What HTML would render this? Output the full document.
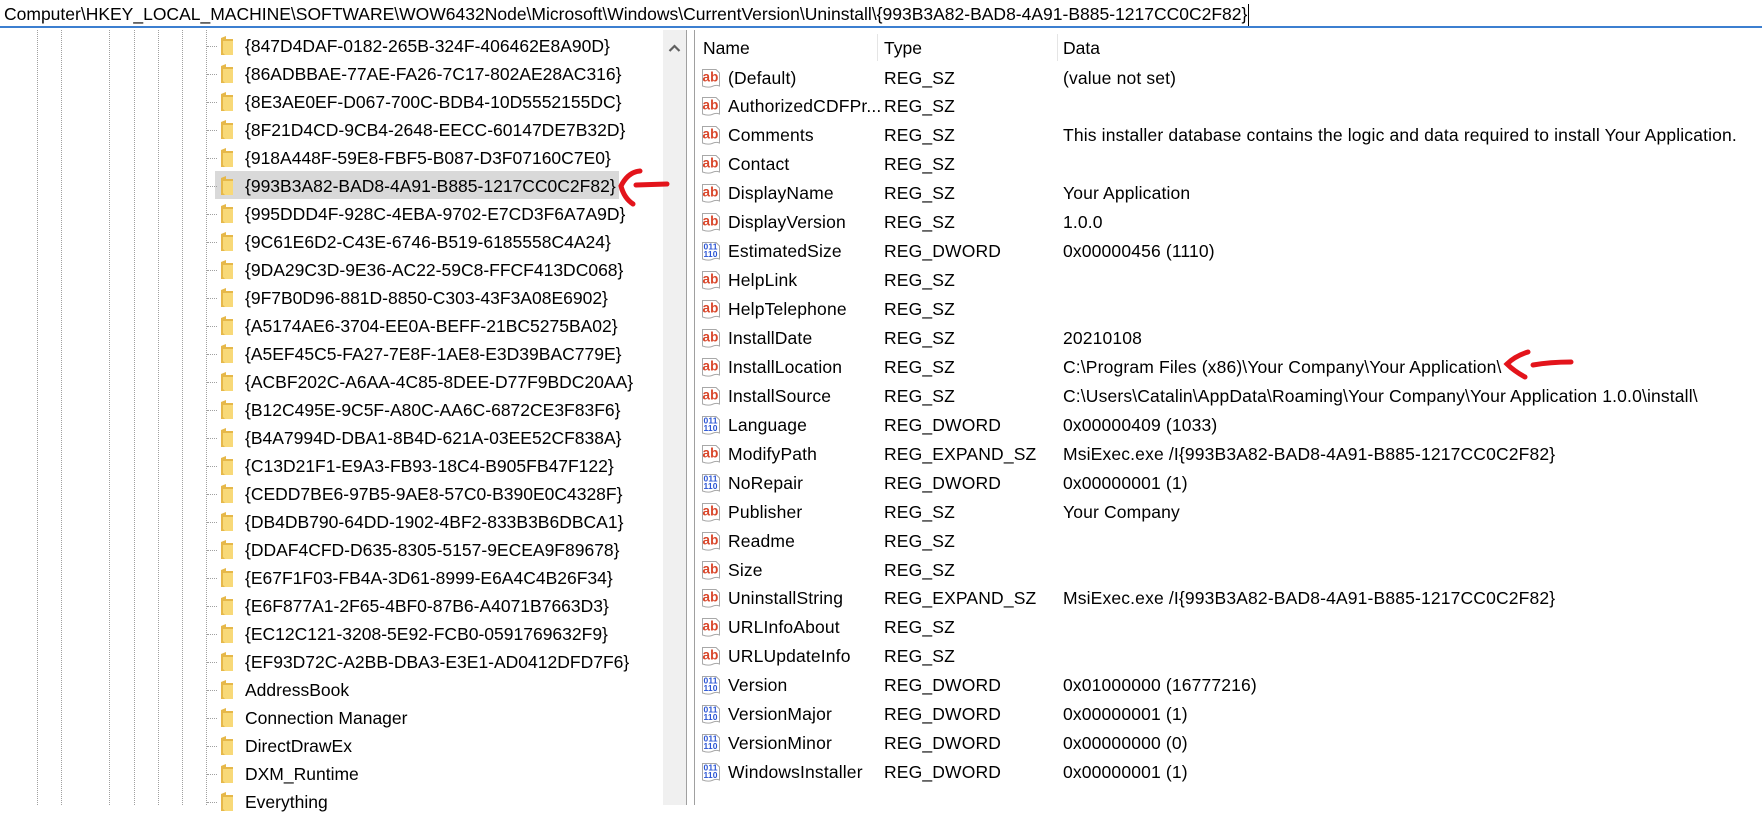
<!DOCTYPE html>
<html><head><meta charset="utf-8">
<style>
*{margin:0;padding:0;box-sizing:border-box}
html,body{width:1762px;height:805px;overflow:hidden;background:#fff;font-family:"Liberation Sans",sans-serif;color:#000}
#addr{position:absolute;left:0;top:0;width:1762px;height:28px;border-bottom:2px solid #3c7fd0;font-size:17.5px;line-height:28px;padding-left:4px;white-space:nowrap;letter-spacing:0}
#addr i{display:inline-block;width:1px;height:22px;background:#000;vertical-align:middle;margin-left:1px}
.vd{position:absolute;top:30px;height:775px;width:0;border-left:1px dotted #a0a0a0}
.t{position:absolute;left:0;height:28px;width:663px;font-size:17.5px;line-height:28px;letter-spacing:0;white-space:nowrap}
.t .h{position:absolute;left:207px;top:14px;width:10px;border-top:1px dotted #a0a0a0}
.t .f{position:absolute;left:220px;top:4px;width:14px;height:20px}
.t span{position:absolute;left:245px;top:0}
.sel{position:absolute;left:215px;top:171px;width:404px;height:28px;background:#d9d9d9}
#sb{position:absolute;left:663px;top:30px;width:23px;height:775px;background:#f0f0f0}
#sbl{position:absolute;left:686px;top:30px;width:1px;height:775px;background:#a0a0a0}
#sbl2{position:absolute;left:694px;top:30px;width:1px;height:775px;background:#a0a0a0}
.hd{position:absolute;top:34px;font-size:17.5px;line-height:28px}
.cd{position:absolute;top:34px;width:1px;height:27px;background:#e5e5e5}
.r{position:absolute;left:695px;height:29px;width:1067px;font-size:17.5px;line-height:29px;white-space:nowrap;letter-spacing:0.15px}
.r svg{position:absolute;left:7px;top:5px}
.r .n{position:absolute;left:33px;top:0}
.r .ty{position:absolute;left:189px;top:0}
.r .d{position:absolute;left:368px;top:0}
</style></head><body>
<div id="addr">Computer\HKEY_LOCAL_MACHINE\SOFTWARE\WOW6432Node\Microsoft\Windows\CurrentVersion\Uninstall\{993B3A82-BAD8-4A91-B885-1217CC0C2F82}<i></i></div>

<div class="vd" style="left:37px"></div>
<div class="vd" style="left:61px"></div>
<div class="vd" style="left:109px"></div>
<div class="vd" style="left:134px"></div>
<div class="vd" style="left:158px"></div>
<div class="vd" style="left:182px"></div>
<div class="vd" style="left:206px"></div>
<div class="sel"></div>

<svg width="0" height="0" style="position:absolute">
<defs>
<symbol id="fold" viewBox="0 0 14 20"><path d="M1 2 L6 0 L6 3 L13 3 L13 19 L1 19 Z" fill="#e6b84a"/><path d="M3 5 L13 5 L13 19 L5 19 L3 17 Z" fill="#f8d978"/></symbol>
<symbol id="ab" viewBox="0 0 18 19"><path d="M0.5 0.5 H14 L17.5 4 V17 Q14 15.5 10 17.5 Q6 19 0.5 17 Z" fill="#fff" stroke="#a8a8a8"/><text x="0.5" y="12.5" font-family="Liberation Sans,sans-serif" font-weight="bold" font-size="13.5" fill="#d9462a">ab</text></symbol>
<symbol id="dw" viewBox="0 0 18 19"><path d="M0.5 0.5 H14 L17.5 4 V17 Q14 15.5 10 17.5 Q6 19 0.5 17 Z" fill="#fff" stroke="#a8a8a8"/><text x="1.5" y="7.5" font-family="Liberation Sans,sans-serif" font-weight="bold" font-size="8.5" fill="#2b55d4">011</text><text x="1.5" y="15" font-family="Liberation Sans,sans-serif" font-weight="bold" font-size="8.5" fill="#2b55d4">110</text></symbol>
</defs></svg>

<div class="t" style="top:32px"><div class="h"></div><svg class="f"><use href="#fold"/></svg><span>{847D4DAF-0182-265B-324F-406462E8A90D}</span></div>
<div class="t" style="top:60px"><div class="h"></div><svg class="f"><use href="#fold"/></svg><span>{86ADBBAE-77AE-FA26-7C17-802AE28AC316}</span></div>
<div class="t" style="top:88px"><div class="h"></div><svg class="f"><use href="#fold"/></svg><span>{8E3AE0EF-D067-700C-BDB4-10D5552155DC}</span></div>
<div class="t" style="top:116px"><div class="h"></div><svg class="f"><use href="#fold"/></svg><span>{8F21D4CD-9CB4-2648-EECC-60147DE7B32D}</span></div>
<div class="t" style="top:144px"><div class="h"></div><svg class="f"><use href="#fold"/></svg><span>{918A448F-59E8-FBF5-B087-D3F07160C7E0}</span></div>
<div class="t" style="top:172px"><div class="h"></div><svg class="f"><use href="#fold"/></svg><span>{993B3A82-BAD8-4A91-B885-1217CC0C2F82}</span></div>
<div class="t" style="top:200px"><div class="h"></div><svg class="f"><use href="#fold"/></svg><span>{995DDD4F-928C-4EBA-9702-E7CD3F6A7A9D}</span></div>
<div class="t" style="top:228px"><div class="h"></div><svg class="f"><use href="#fold"/></svg><span>{9C61E6D2-C43E-6746-B519-6185558C4A24}</span></div>
<div class="t" style="top:256px"><div class="h"></div><svg class="f"><use href="#fold"/></svg><span>{9DA29C3D-9E36-AC22-59C8-FFCF413DC068}</span></div>
<div class="t" style="top:284px"><div class="h"></div><svg class="f"><use href="#fold"/></svg><span>{9F7B0D96-881D-8850-C303-43F3A08E6902}</span></div>
<div class="t" style="top:312px"><div class="h"></div><svg class="f"><use href="#fold"/></svg><span>{A5174AE6-3704-EE0A-BEFF-21BC5275BA02}</span></div>
<div class="t" style="top:340px"><div class="h"></div><svg class="f"><use href="#fold"/></svg><span>{A5EF45C5-FA27-7E8F-1AE8-E3D39BAC779E}</span></div>
<div class="t" style="top:368px"><div class="h"></div><svg class="f"><use href="#fold"/></svg><span>{ACBF202C-A6AA-4C85-8DEE-D77F9BDC20AA}</span></div>
<div class="t" style="top:396px"><div class="h"></div><svg class="f"><use href="#fold"/></svg><span>{B12C495E-9C5F-A80C-AA6C-6872CE3F83F6}</span></div>
<div class="t" style="top:424px"><div class="h"></div><svg class="f"><use href="#fold"/></svg><span>{B4A7994D-DBA1-8B4D-621A-03EE52CF838A}</span></div>
<div class="t" style="top:452px"><div class="h"></div><svg class="f"><use href="#fold"/></svg><span>{C13D21F1-E9A3-FB93-18C4-B905FB47F122}</span></div>
<div class="t" style="top:480px"><div class="h"></div><svg class="f"><use href="#fold"/></svg><span>{CEDD7BE6-97B5-9AE8-57C0-B390E0C4328F}</span></div>
<div class="t" style="top:508px"><div class="h"></div><svg class="f"><use href="#fold"/></svg><span>{DB4DB790-64DD-1902-4BF2-833B3B6DBCA1}</span></div>
<div class="t" style="top:536px"><div class="h"></div><svg class="f"><use href="#fold"/></svg><span>{DDAF4CFD-D635-8305-5157-9ECEA9F89678}</span></div>
<div class="t" style="top:564px"><div class="h"></div><svg class="f"><use href="#fold"/></svg><span>{E67F1F03-FB4A-3D61-8999-E6A4C4B26F34}</span></div>
<div class="t" style="top:592px"><div class="h"></div><svg class="f"><use href="#fold"/></svg><span>{E6F877A1-2F65-4BF0-87B6-A4071B7663D3}</span></div>
<div class="t" style="top:620px"><div class="h"></div><svg class="f"><use href="#fold"/></svg><span>{EC12C121-3208-5E92-FCB0-0591769632F9}</span></div>
<div class="t" style="top:648px"><div class="h"></div><svg class="f"><use href="#fold"/></svg><span>{EF93D72C-A2BB-DBA3-E3E1-AD0412DFD7F6}</span></div>
<div class="t" style="top:676px"><div class="h"></div><svg class="f"><use href="#fold"/></svg><span>AddressBook</span></div>
<div class="t" style="top:704px"><div class="h"></div><svg class="f"><use href="#fold"/></svg><span>Connection Manager</span></div>
<div class="t" style="top:732px"><div class="h"></div><svg class="f"><use href="#fold"/></svg><span>DirectDrawEx</span></div>
<div class="t" style="top:760px"><div class="h"></div><svg class="f"><use href="#fold"/></svg><span>DXM_Runtime</span></div>
<div class="t" style="top:788px"><div class="h"></div><svg class="f"><use href="#fold"/></svg><span>Everything</span></div>

<div id="sb"><svg width="23" height="30" style="position:absolute;left:0;top:8px"><path d="M6.5 13 L11.5 8 L16.5 13" fill="none" stroke="#606060" stroke-width="2.2"/></svg></div>
<div id="sbl"></div><div id="sbl2"></div>

<div class="hd" style="left:703px">Name</div>
<div class="cd" style="left:877px"></div>
<div class="hd" style="left:884px">Type</div>
<div class="cd" style="left:1057px"></div>
<div class="hd" style="left:1063px">Data</div>

<div class="r" style="top:63.5px"><svg width="18" height="19"><use href="#ab"/></svg><span class="n">(Default)</span><span class="ty">REG_SZ</span><span class="d">(value not set)</span></div>
<div class="r" style="top:92.4px"><svg width="18" height="19"><use href="#ab"/></svg><span class="n">AuthorizedCDFPr...</span><span class="ty">REG_SZ</span></div>
<div class="r" style="top:121.4px"><svg width="18" height="19"><use href="#ab"/></svg><span class="n">Comments</span><span class="ty">REG_SZ</span><span class="d">This installer database contains the logic and data required to install Your Application.</span></div>
<div class="r" style="top:150.3px"><svg width="18" height="19"><use href="#ab"/></svg><span class="n">Contact</span><span class="ty">REG_SZ</span></div>
<div class="r" style="top:179.3px"><svg width="18" height="19"><use href="#ab"/></svg><span class="n">DisplayName</span><span class="ty">REG_SZ</span><span class="d">Your Application</span></div>
<div class="r" style="top:208.2px"><svg width="18" height="19"><use href="#ab"/></svg><span class="n">DisplayVersion</span><span class="ty">REG_SZ</span><span class="d">1.0.0</span></div>
<div class="r" style="top:237.1px"><svg width="18" height="19"><use href="#dw"/></svg><span class="n">EstimatedSize</span><span class="ty">REG_DWORD</span><span class="d">0x00000456 (1110)</span></div>
<div class="r" style="top:266.1px"><svg width="18" height="19"><use href="#ab"/></svg><span class="n">HelpLink</span><span class="ty">REG_SZ</span></div>
<div class="r" style="top:295px"><svg width="18" height="19"><use href="#ab"/></svg><span class="n">HelpTelephone</span><span class="ty">REG_SZ</span></div>
<div class="r" style="top:324px"><svg width="18" height="19"><use href="#ab"/></svg><span class="n">InstallDate</span><span class="ty">REG_SZ</span><span class="d">20210108</span></div>
<div class="r" style="top:352.9px"><svg width="18" height="19"><use href="#ab"/></svg><span class="n">InstallLocation</span><span class="ty">REG_SZ</span><span class="d">C:\Program Files (x86)\Your Company\Your Application\</span></div>
<div class="r" style="top:381.8px"><svg width="18" height="19"><use href="#ab"/></svg><span class="n">InstallSource</span><span class="ty">REG_SZ</span><span class="d">C:\Users\Catalin\AppData\Roaming\Your Company\Your Application 1.0.0\install\</span></div>
<div class="r" style="top:410.8px"><svg width="18" height="19"><use href="#dw"/></svg><span class="n">Language</span><span class="ty">REG_DWORD</span><span class="d">0x00000409 (1033)</span></div>
<div class="r" style="top:439.7px"><svg width="18" height="19"><use href="#ab"/></svg><span class="n">ModifyPath</span><span class="ty">REG_EXPAND_SZ</span><span class="d">MsiExec.exe /I{993B3A82-BAD8-4A91-B885-1217CC0C2F82}</span></div>
<div class="r" style="top:468.7px"><svg width="18" height="19"><use href="#dw"/></svg><span class="n">NoRepair</span><span class="ty">REG_DWORD</span><span class="d">0x00000001 (1)</span></div>
<div class="r" style="top:497.6px"><svg width="18" height="19"><use href="#ab"/></svg><span class="n">Publisher</span><span class="ty">REG_SZ</span><span class="d">Your Company</span></div>
<div class="r" style="top:526.5px"><svg width="18" height="19"><use href="#ab"/></svg><span class="n">Readme</span><span class="ty">REG_SZ</span></div>
<div class="r" style="top:555.5px"><svg width="18" height="19"><use href="#ab"/></svg><span class="n">Size</span><span class="ty">REG_SZ</span></div>
<div class="r" style="top:584.4px"><svg width="18" height="19"><use href="#ab"/></svg><span class="n">UninstallString</span><span class="ty">REG_EXPAND_SZ</span><span class="d">MsiExec.exe /I{993B3A82-BAD8-4A91-B885-1217CC0C2F82}</span></div>
<div class="r" style="top:613.4px"><svg width="18" height="19"><use href="#ab"/></svg><span class="n">URLInfoAbout</span><span class="ty">REG_SZ</span></div>
<div class="r" style="top:642.3px"><svg width="18" height="19"><use href="#ab"/></svg><span class="n">URLUpdateInfo</span><span class="ty">REG_SZ</span></div>
<div class="r" style="top:671.2px"><svg width="18" height="19"><use href="#dw"/></svg><span class="n">Version</span><span class="ty">REG_DWORD</span><span class="d">0x01000000 (16777216)</span></div>
<div class="r" style="top:700.2px"><svg width="18" height="19"><use href="#dw"/></svg><span class="n">VersionMajor</span><span class="ty">REG_DWORD</span><span class="d">0x00000001 (1)</span></div>
<div class="r" style="top:729.1px"><svg width="18" height="19"><use href="#dw"/></svg><span class="n">VersionMinor</span><span class="ty">REG_DWORD</span><span class="d">0x00000000 (0)</span></div>
<div class="r" style="top:758.1px"><svg width="18" height="19"><use href="#dw"/></svg><span class="n">WindowsInstaller</span><span class="ty">REG_DWORD</span><span class="d">0x00000001 (1)</span></div>

<svg width="1762" height="805" style="position:absolute;left:0;top:0;pointer-events:none">
<path d="M640 171 Q628 172 621 186 Q624 198 633 204" fill="none" stroke="#e3141b" stroke-width="5" stroke-linecap="round"/>
<path d="M636 185 L667 184" fill="none" stroke="#e3141b" stroke-width="5" stroke-linecap="round"/>
<path d="M1528 352 Q1515 356 1507 364 Q1514 371 1525 377" fill="none" stroke="#e3141b" stroke-width="5" stroke-linecap="round"/>
<path d="M1533 365 Q1550 362 1571 362" fill="none" stroke="#e3141b" stroke-width="5" stroke-linecap="round"/>
</svg>
</body></html>
